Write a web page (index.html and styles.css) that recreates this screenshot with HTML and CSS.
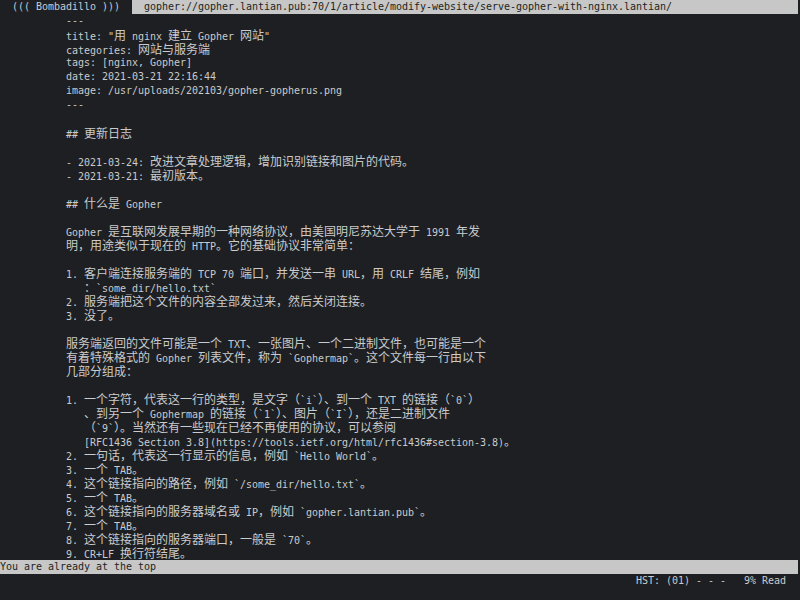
FILE: index.html
```html
<!DOCTYPE html>
<html lang="zh">
<head>
<meta charset="utf-8">
<title>Bombadillo</title>
<link rel="stylesheet" href="styles.css">
</head>
<body>
<div class="term">
  <div class="header">
    <span class="brand">((( Bombadillo )))</span>
    <span class="urlbar">gopher://gopher.lantian.pub:70/1/article/modify-website/serve-gopher-with-nginx.lantian/</span>
  </div>
  <div class="content">
    <div class="ln">---</div>
    <div class="ln">title: "<span class="c">用</span> nginx <span class="c">建立</span> Gopher <span class="c">网站</span>"</div>
    <div class="ln">categories: <span class="c">网站与服务端</span></div>
    <div class="ln">tags: [nginx, Gopher]</div>
    <div class="ln">date: 2021-03-21 22:16:44</div>
    <div class="ln">image: /usr/uploads/202103/gopher-gopherus.png</div>
    <div class="ln">---</div>
    <div class="ln"> </div>
    <div class="ln">## <span class="c">更新日志</span></div>
    <div class="ln"> </div>
    <div class="ln">- 2021-03-24: <span class="c">改进文章处理逻辑，增加识别链接和图片的代码。</span></div>
    <div class="ln">- 2021-03-21: <span class="c">最初版本。</span></div>
    <div class="ln"> </div>
    <div class="ln">## <span class="c">什么是</span> Gopher</div>
    <div class="ln"> </div>
    <div class="ln">Gopher <span class="c">是互联网发展早期的一种网络协议，由美国明尼苏达大学于</span> 1991 <span class="c">年发</span></div>
    <div class="ln"><span class="c">明，用途类似于现在的</span> HTTP<span class="c">。它的基础协议非常简单：</span></div>
    <div class="ln"> </div>
    <div class="ln">1. <span class="c">客户端连接服务端的</span> TCP 70 <span class="c">端口，并发送一串</span> URL<span class="c">，用</span> CRLF <span class="c">结尾，例如</span></div>
    <div class="ln">   <span class="c">：</span>`some_dir/hello.txt`</div>
    <div class="ln">2. <span class="c">服务端把这个文件的内容全部发过来，然后关闭连接。</span></div>
    <div class="ln">3. <span class="c">没了。</span></div>
    <div class="ln"> </div>
    <div class="ln"><span class="c">服务端返回的文件可能是一个</span> TXT<span class="c">、一张图片、一个二进制文件，也可能是一个</span></div>
    <div class="ln"><span class="c">有着特殊格式的</span> Gopher <span class="c">列表文件，称为</span> `Gophermap`<span class="c">。这个文件每一行由以下</span></div>
    <div class="ln"><span class="c">几部分组成：</span></div>
    <div class="ln"> </div>
    <div class="ln">1. <span class="c">一个字符，代表这一行的类型，是文字（</span>`i`<span class="c">）、到一个</span> TXT <span class="c">的链接（</span>`0`<span class="c">）</span></div>
    <div class="ln">   <span class="c">、到另一个</span> Gophermap <span class="c">的链接（</span>`1`<span class="c">）、图片（</span>`I`<span class="c">），还是二进制文件</span></div>
    <div class="ln">   <span class="c">（</span>`9`<span class="c">）。当然还有一些现在已经不再使用的协议，可以参阅</span></div>
    <div class="ln">   [RFC1436 Section 3.8](https://tools.ietf.org/html/rfc1436#section-3.8)<span class="c">。</span></div>
    <div class="ln">2. <span class="c">一句话，代表这一行显示的信息，例如</span> `Hello World`<span class="c">。</span></div>
    <div class="ln">3. <span class="c">一个</span> TAB<span class="c">。</span></div>
    <div class="ln">4. <span class="c">这个链接指向的路径，例如</span> `/some_dir/hello.txt`<span class="c">。</span></div>
    <div class="ln">5. <span class="c">一个</span> TAB<span class="c">。</span></div>
    <div class="ln">6. <span class="c">这个链接指向的服务器域名或</span> IP<span class="c">，例如</span> `gopher.lantian.pub`<span class="c">。</span></div>
    <div class="ln">7. <span class="c">一个</span> TAB<span class="c">。</span></div>
    <div class="ln">8. <span class="c">这个链接指向的服务器端口，一般是</span> `70`<span class="c">。</span></div>
    <div class="ln">9. CR+LF <span class="c">换行符结尾。</span></div>
  </div>
  <div class="status">You are already at the top</div>
  <div class="footer">HST: (01) - - -   9% Read</div>
</div>
</body>
</html>
```
FILE: styles.css
```css
html, body {
  margin: 0;
  padding: 0;
  background: #1e1f22;
  height: 100%;
}
body {
  overflow: hidden;
}
.term {
  width: 798px;
  display: flex;
  flex-direction: column;
  font-family: "DejaVu Sans Mono", "Noto Sans CJK SC", monospace;
  font-size: 10px;
  letter-spacing: -0.02px;
  line-height: 14px;
  color: #c9cbcd;
}
.header {
  display: flex;
  height: 14px;
}
.brand {
  width: 108px;
  padding-left: 12px;
  padding-right: 12px;
  color: #c4ccd6;
  white-space: pre;
}
.urlbar {
  flex: 1;
  background: #c6c7c6;
  color: #1e1f22;
  padding-left: 12px;
  overflow: hidden;
  white-space: pre;
}
.content {
  height: 546px;
  padding-left: 66px;
  overflow: hidden;
}
.ln {
  height: 14px;
  white-space: pre;
}
.c {
  font-family: "Noto Sans CJK SC", sans-serif;
  font-size: 12px;
  letter-spacing: 0;
}
.status {
  height: 14px;
  background: #c6c7c6;
  color: #1e1f22;
  white-space: pre;
}
.footer {
  height: 14px;
  text-align: right;
  padding-right: 12px;
  white-space: pre;
}
```
